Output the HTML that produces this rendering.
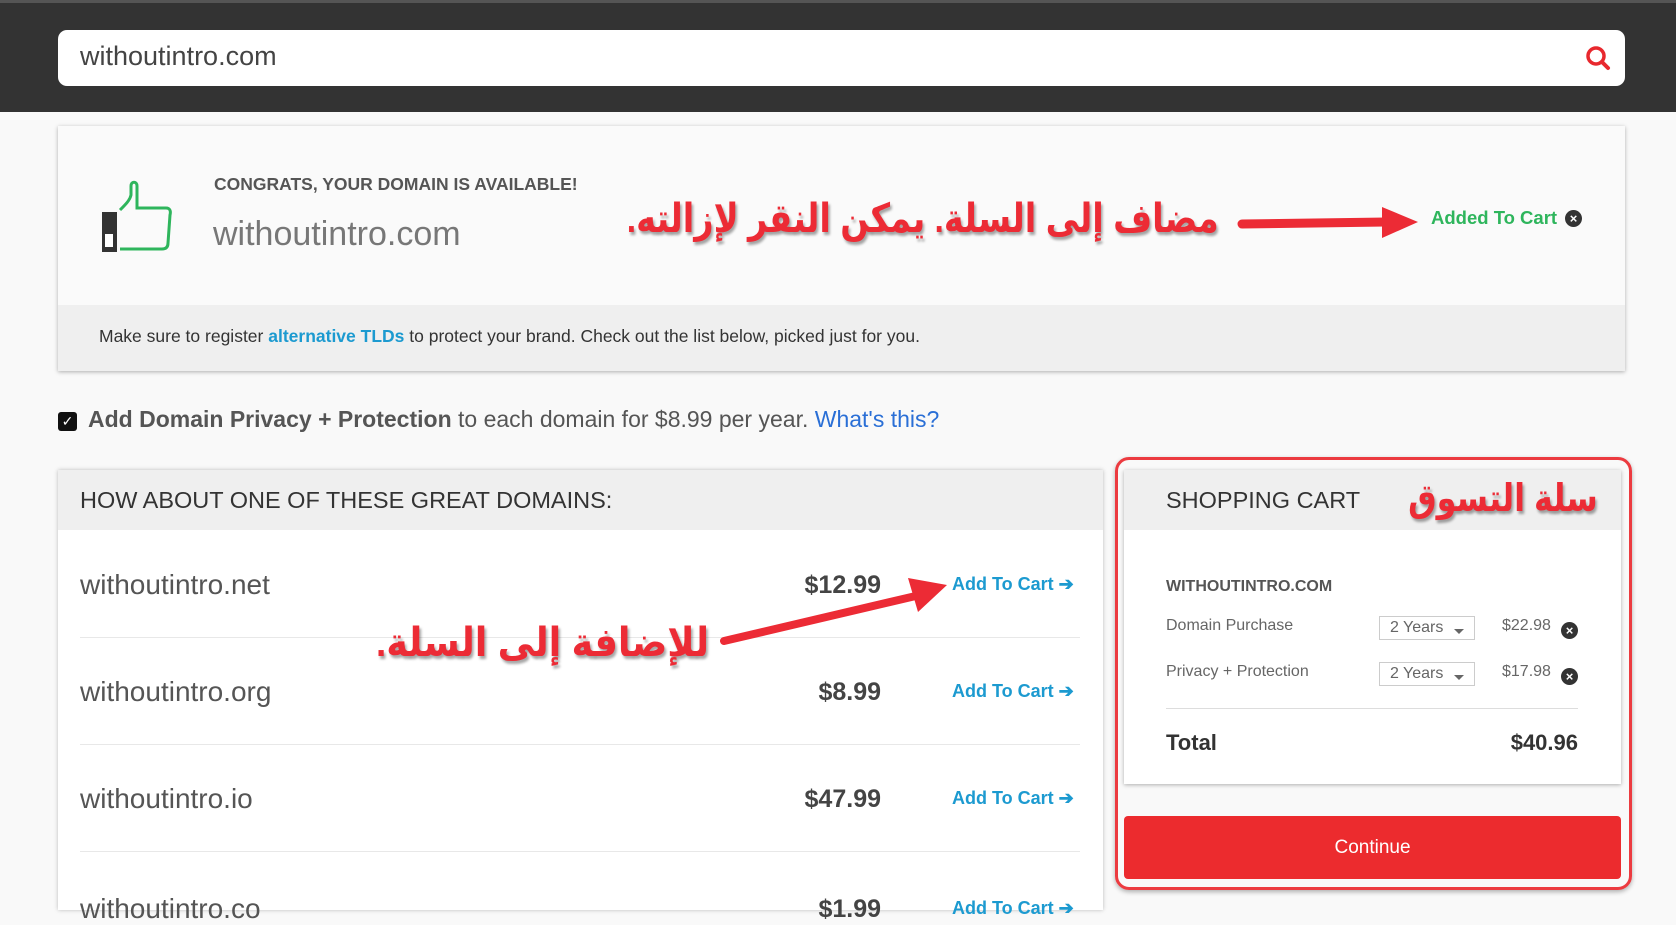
<!DOCTYPE html>
<html><head><meta charset="utf-8"><style>
*{margin:0;padding:0;box-sizing:border-box}
body{width:1676px;height:901px;overflow:hidden;background:#f9f9f9;font-family:"Liberation Sans",sans-serif;position:relative;color:#555}
.a{position:absolute;white-space:nowrap}
.ar{font-family:"Liberation Sans","Noto Sans CJK SC","DejaVu Sans",sans-serif;color:#ec2b35;font-weight:bold;text-shadow:2px 3px 3px rgba(0,0,0,.35);direction:rtl;transform-origin:right center}
.cart{color:#1c9ad0;font-size:18px;font-weight:bold}
.sep{position:absolute;height:1px;background:#e8e8e8}
.x{display:inline-block;width:17px;height:17px;border-radius:50%;background:#333;color:#fff;font-size:13px;line-height:17px;text-align:center;font-weight:bold}
.sel{position:absolute;width:96px;height:24px;border:1px solid #ccc;background:#fff;font-size:16px;color:#666;padding:2px 10px}
.sel:after{content:"";position:absolute;right:10px;top:12px;border:5px solid transparent;border-top-color:#666}
</style></head><body>
<div class="a" style="left:0;top:0;width:1676px;height:112px;background:#333;border-top:3px solid #555"></div>
<div class="a" style="left:58px;top:30px;width:1567px;height:56px;background:#fff;border-radius:9px"></div>
<div class="a" style="left:80px;top:41px;font-size:27px;color:#444">withoutintro.com</div>
<svg class="a" style="left:1585px;top:45px" width="26" height="26" viewBox="0 0 26 26"><circle cx="11" cy="11" r="8" fill="none" stroke="#e8282e" stroke-width="3.5"/><line x1="17" y1="17" x2="23" y2="23" stroke="#e8282e" stroke-width="4" stroke-linecap="round"/></svg>

<div class="a" style="left:58px;top:126px;width:1567px;height:245px;background:#fafafa;box-shadow:0 1px 4px rgba(0,0,0,.3)"></div>
<div class="a" style="left:58px;top:305px;width:1567px;height:66px;background:#efefef"></div>
<svg class="a" style="left:100px;top:180px" width="75" height="72" viewBox="0 0 75 72"><path d="M20 30 C26 24 30 20 31 15 L31 6 C31 1 37 1 37 6 L37 28 L66 28 C70 28 71 31 70 35 L68 63 C68 67 66 69 62 69 L20 69" fill="none" stroke="#2eb55c" stroke-width="3"/><rect x="2" y="32" width="15" height="40" fill="#333"/><rect x="5" y="54" width="8" height="13" fill="#fff"/></svg>
<div class="a" style="left:214px;top:174px;font-size:17.5px;font-weight:bold;color:#555">CONGRATS, YOUR DOMAIN IS AVAILABLE!</div>
<div class="a" style="left:213px;top:215px;font-size:34px;color:#777;font-weight:300">withoutintro.com</div>
<div class="a ar" style="right:457px;top:196px;font-size:40px;transform:scaleX(0.84)">مضاف إلى السلة. يمكن النقر لإزالته.</div>
<svg class="a" style="left:1236px;top:204px" width="190" height="40" viewBox="0 0 190 40"><path d="M6 20 L150 18" stroke="#ec2b35" stroke-width="9" stroke-linecap="round"/><path d="M146 3 L182 18 L146 34 Z" fill="#ec2b35"/></svg>
<div class="a" style="left:1431px;top:207px;font-size:18.5px;color:#2eb55c;font-weight:bold">Added To Cart</div>
<div class="a x" style="left:1565px;top:210px">×</div>
<div class="a" style="left:99px;top:326px;font-size:17.5px;color:#333">Make sure to register <span style="color:#1c9ad0;font-weight:bold">alternative TLDs</span> to protect your brand. Check out the list below, picked just for you.</div>

<div class="a" style="left:58px;top:412px;width:19px;height:19px;background:#111;border-radius:3px;color:#fff;font-size:14px;line-height:19px;text-align:center">✓</div>
<div class="a" style="left:88px;top:406px;font-size:23px;color:#555"><b style="color:#555">Add Domain Privacy + Protection</b> to each domain for $8.99 per year. <span style="color:#2a6fd6">What's this?</span></div>

<div class="a" style="left:58px;top:470px;width:1045px;height:440px;background:#fff;box-shadow:0 0 4px rgba(0,0,0,.25)"></div>
<div class="a" style="left:58px;top:470px;width:1045px;height:60px;background:#efefef"></div>
<div class="a" style="left:80px;top:487px;font-size:23.5px;color:#333">HOW ABOUT ONE OF THESE GREAT DOMAINS:</div>
<div class="a" style="left:80px;top:569px;font-size:28px;color:#555">withoutintro.net</div>
<div class="a" style="left:760px;top:571px;width:121px;text-align:right;font-size:25px;color:#444;font-weight:bold">$12.99</div>
<div class="a cart" style="left:952px;top:574px">Add To Cart ➔</div>
<div class="sep" style="left:80px;top:637px;width:1000px"></div>
<div class="a" style="left:80px;top:676px;font-size:28px;color:#555">withoutintro.org</div>
<div class="a" style="left:760px;top:678px;width:121px;text-align:right;font-size:25px;color:#444;font-weight:bold">$8.99</div>
<div class="a cart" style="left:952px;top:681px">Add To Cart ➔</div>
<div class="sep" style="left:80px;top:744px;width:1000px"></div>
<div class="a" style="left:80px;top:783px;font-size:28px;color:#555">withoutintro.io</div>
<div class="a" style="left:760px;top:785px;width:121px;text-align:right;font-size:25px;color:#444;font-weight:bold">$47.99</div>
<div class="a cart" style="left:952px;top:788px">Add To Cart ➔</div>
<div class="sep" style="left:80px;top:851px;width:1000px"></div>
<div class="a" style="left:80px;top:893px;font-size:28px;color:#555">withoutintro.co</div>
<div class="a" style="left:760px;top:895px;width:121px;text-align:right;font-size:25px;color:#444;font-weight:bold">$1.99</div>
<div class="a cart" style="left:952px;top:898px">Add To Cart ➔</div>
<div class="a ar" style="right:967px;top:620px;font-size:40px;transform:scaleX(0.92)">للإضافة إلى السلة.</div>
<svg class="a" style="left:715px;top:572px" width="240" height="80" viewBox="0 0 240 80"><path d="M9 69 L205 23" stroke="#ec2b35" stroke-width="8" stroke-linecap="round"/><path d="M193 6 L232 13 L203 40 Z" fill="#ec2b35"/></svg>

<div class="a" style="left:1115px;top:457px;width:517px;height:433px;border:3px solid #ec3b40;border-radius:14px;box-shadow:0 2px 5px rgba(0,0,0,.3)"></div>
<div class="a" style="left:1124px;top:470px;width:497px;height:314px;background:#fff;box-shadow:0 1px 4px rgba(0,0,0,.3)"></div>
<div class="a" style="left:1124px;top:470px;width:497px;height:60px;background:#efefef"></div>
<div class="a" style="left:1166px;top:487px;font-size:23.5px;color:#333">SHOPPING CART</div>
<div class="a ar" style="right:78px;top:476px;font-size:38px;transform:scaleX(0.84)">سلة التسوق</div>
<div class="a" style="left:1166px;top:578px;font-size:16px;color:#555;font-weight:bold">WITHOUTINTRO.COM</div>
<div class="a" style="left:1166px;top:617px;font-size:16px;color:#666">Domain Purchase</div>
<div class="sel" style="left:1379px;top:616px">2 Years</div>
<div class="a" style="left:1502px;top:617px;font-size:16px;color:#666">$22.98</div>
<div class="a x" style="left:1561px;top:622px">×</div>
<div class="a" style="left:1166px;top:663px;font-size:16px;color:#666">Privacy + Protection</div>
<div class="sel" style="left:1379px;top:662px">2 Years</div>
<div class="a" style="left:1502px;top:663px;font-size:16px;color:#666">$17.98</div>
<div class="a x" style="left:1561px;top:668px">×</div>
<div class="sep" style="left:1166px;top:708px;width:412px;background:#ddd"></div>
<div class="a" style="left:1166px;top:730px;font-size:22px;color:#333;font-weight:bold">Total</div>
<div class="a" style="left:1450px;top:730px;width:128px;text-align:right;font-size:22px;color:#333;font-weight:bold">$40.96</div>
<div class="a" style="left:1124px;top:816px;width:497px;height:63px;background:#ec2b2e;border-radius:4px;color:#fff;font-size:19px;text-align:center;line-height:63px">Continue</div>
</body></html>
